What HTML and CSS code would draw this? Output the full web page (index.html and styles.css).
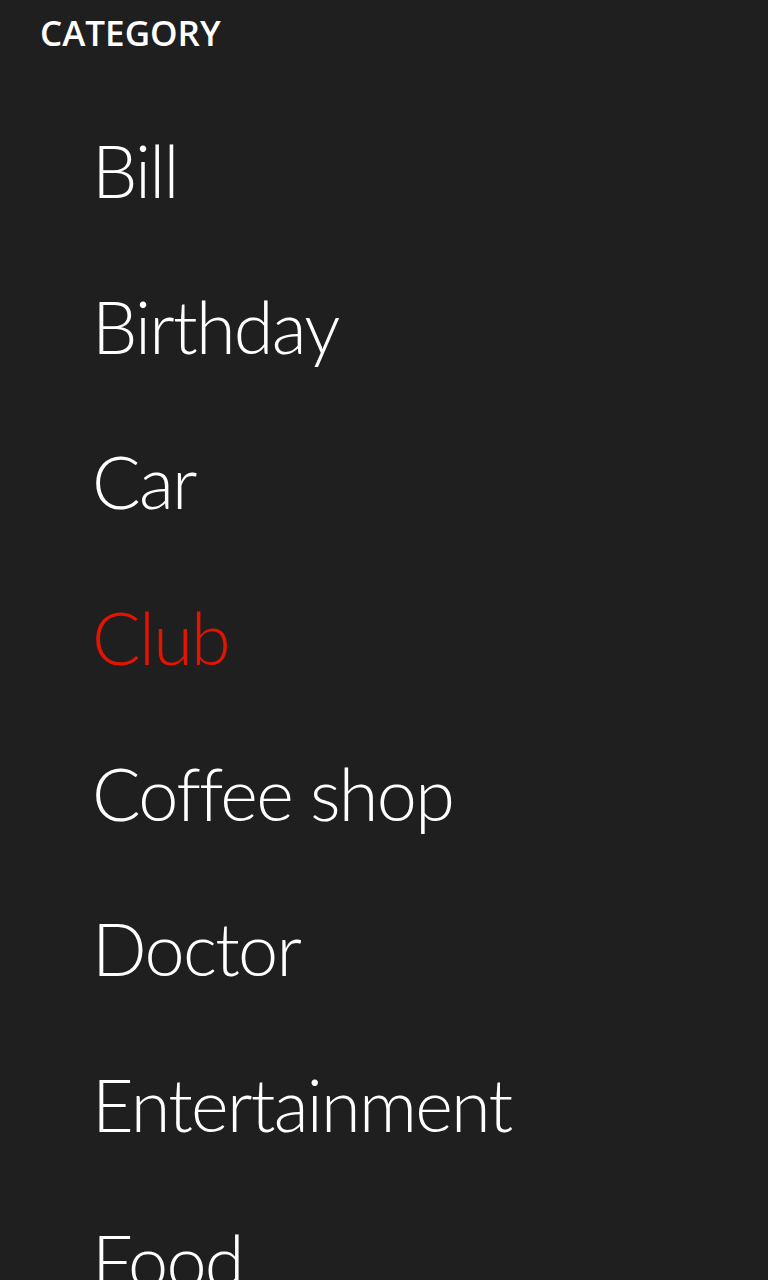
FILE: index.html
```html
<!DOCTYPE html>
<html>
<head>
<meta charset="utf-8">
<link rel="stylesheet" href="styles.css">
</head>
<body>
<div class="page">
  <header class="header">CATEGORY</header>
  <ul class="list">
    <li class="item">Bill</li>
    <li class="item">Birthday</li>
    <li class="item">Car</li>
    <li class="item selected">Club</li>
    <li class="item">Coffee shop</li>
    <li class="item">Doctor</li>
    <li class="item">Entertainment</li>
    <li class="item">Food</li>
  </ul>
</div>
</body>
</html>
```
FILE: styles.css
```css
html, body {
  margin: 0;
  padding: 0;
  background: #1f1f1f;
  height: 100%;
  overflow: hidden;
}
.page {
  width: 768px;
  height: 1280px;
  overflow: hidden;
  font-family: "Open Sans", "Noto Sans", sans-serif;
  color: #ffffff;
}
.header {
  box-sizing: border-box;
  height: 93px;
  padding: 9px 0 0 40px;
  font-size: 35px;
  font-weight: 600;
  line-height: 48px;
  letter-spacing: 0;
}
.list {
  list-style: none;
  margin: 0;
  padding: 0 0 0 92px;
}
.item {
  height: 155.67px;
  line-height: 155.67px;
  font-family: "Lato", "Open Sans", sans-serif;
  font-size: 72px;
  font-weight: 300;
  letter-spacing: -1.7px;
  font-variant-ligatures: none;
  white-space: nowrap;
}
.item.selected {
  color: #e51400;
}
```
